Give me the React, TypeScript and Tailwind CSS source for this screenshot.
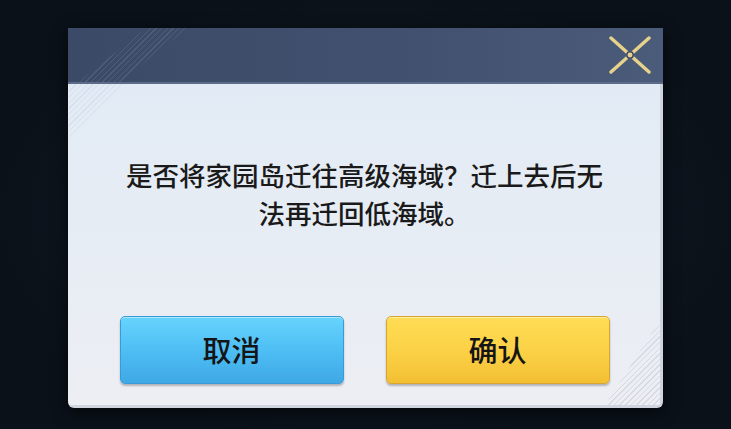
import React from "react";

const CloseMark = () => (
  <svg width="42" height="38" viewBox="0 0 42 38" fill="none">
    <path d="M2 2 L40 36 M40 2 L2 36" stroke="#e6d28a" strokeWidth="3.4" strokeLinecap="round" />
    <circle cx="21" cy="19" r="3.2" fill="#e6d28a" stroke="#3f4e6c" strokeWidth="1.5" />
  </svg>
);

const MoveIslandDialog = () => {
  return (
    <div className="relative w-[595px] h-[380px] flex flex-col rounded-b-[6px] overflow-hidden shadow-[0_4px_16px_rgba(0,0,0,0.6)]">
      {/* Header bar */}
      <div className="relative h-[56px] shrink-0 bg-[linear-gradient(90deg,#3b4a67,#42516f_60%,#4b5b7a)] border-b-2 border-[#5b6b88] flex items-center justify-end pr-[12px]">
        <div className="absolute left-[10px] top-0 h-full w-[110px] bg-[repeating-linear-gradient(-45deg,rgba(255,255,255,0.1)_0_1px,transparent_1px_4px)] [clip-path:polygon(62%_0,100%_0,38%_100%,0_100%)]" />
        <button className="relative flex items-center justify-center">
          <CloseMark />
        </button>
      </div>

      {/* Body */}
      <div className="relative flex-1 flex flex-col bg-[linear-gradient(180deg,#e2ebf5,#e8edf4_60%,#eceef3)] border-r-[3px] border-b-[3px] border-[#cfd5de] border-l border-l-[#e9eef5]">
        <div className="absolute left-0 top-0 w-[55px] h-[55px] bg-[repeating-linear-gradient(-45deg,rgba(170,190,215,0.25)_0_1px,transparent_1px_4px)] [clip-path:polygon(0_0,100%_0,0_100%)]" />
        <div className="absolute right-0 bottom-0 w-[55px] h-[85px] bg-[repeating-linear-gradient(-45deg,rgba(170,180,195,0.35)_0_1px,transparent_1px_4px)] [clip-path:polygon(100%_0,100%_100%,0_100%)]" />

        <div className="relative flex-1 flex items-center justify-center pb-[12px]">
          <p className="text-center text-[26.5px] leading-[38px] font-medium text-[#1a1a1a] [font-family:'Noto_Sans_CJK_SC',sans-serif]">
            是否将家园岛迁往高级海域？迁上去后无
            <br />
            法再迁回低海域。
          </p>
        </div>

        <div className="relative flex justify-center gap-[42px] pb-[21px]">
          <button className="w-[224px] h-[68px] rounded-[5px] border border-[#3a9ad6] bg-[linear-gradient(180deg,#66d4fd,#4cbcf3_55%,#3fa8e6)] shadow-[0_2px_2px_rgba(0,0,0,0.25),inset_0_1px_0_rgba(255,255,255,0.45)] text-[29px] font-medium text-[#151515] [font-family:'Noto_Sans_CJK_SC',sans-serif]">
            取消
          </button>
          <button className="w-[224px] h-[68px] rounded-[5px] border border-[#d9a52c] bg-[linear-gradient(180deg,#ffdd55,#fbd045_55%,#f3bf33)] shadow-[0_2px_2px_rgba(0,0,0,0.25),inset_0_1px_0_rgba(255,255,255,0.45)] text-[29px] font-medium text-[#151515] [font-family:'Noto_Sans_CJK_SC',sans-serif]">
            确认
          </button>
        </div>
      </div>
    </div>
  );
};

export default function App() {
  return (
    <div className="w-[731px] h-[429px] bg-[radial-gradient(ellipse_at_center,#121c28,#0a1119_75%)] pl-[68px] pt-[28px] overflow-hidden">
      <MoveIslandDialog />
    </div>
  );
}
